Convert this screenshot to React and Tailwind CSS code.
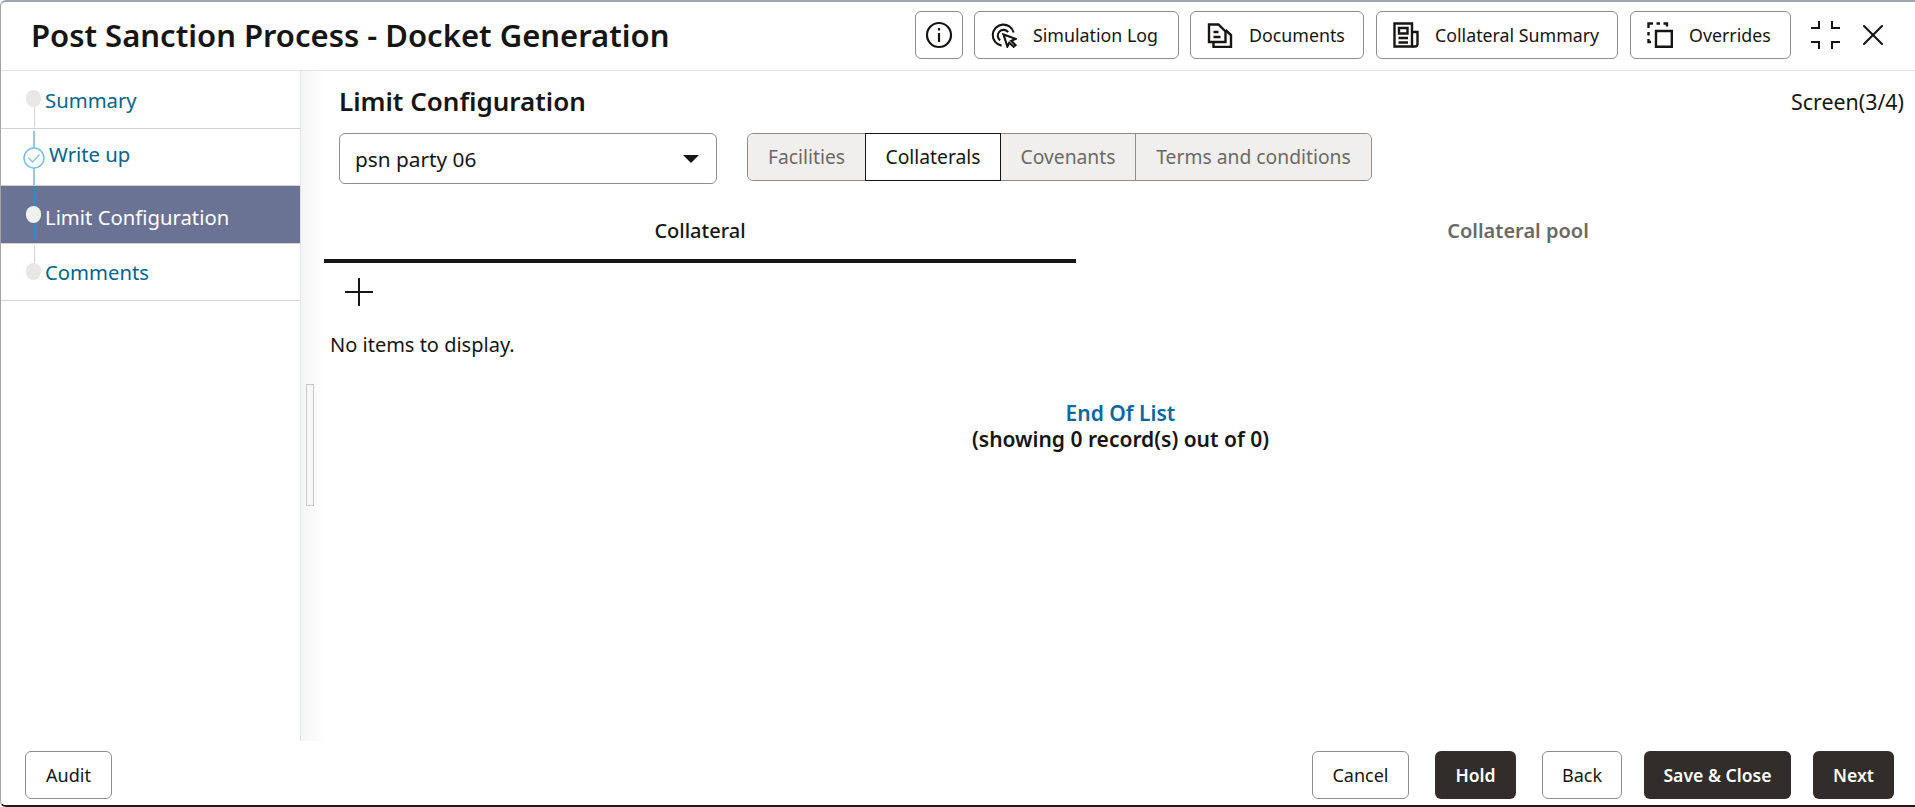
import { X } from "lucide-react";

const font = { fontFamily: '"Noto Sans", sans-serif' };

function SimulationIcon() {
  return (
    <svg width="26" height="25" viewBox="0 0 27 25" fill="none" stroke="#161513" strokeWidth="2.2">
      <path d="M11 23 A11 11 0 1 1 23.5 9.5" />
      <path d="M9.5 17.5 A6 6 0 1 1 17.8 9" />
      <path d="M13 11.5 L25.5 16 L21 18 L25.5 22.5 L23.5 24.2 L19 20 L17 24 Z" fill="#fff" strokeLinejoin="miter" />
    </svg>
  );
}

function DocumentsIcon() {
  return (
    <svg width="26" height="25" viewBox="0 0 25 25" fill="none" stroke="#161513" strokeWidth="2.4">
      <path d="M1.5 1.5 H11 L18 8.5 V19 H1.5 Z" />
      <path d="M18 7 L23.5 12 V24 H6 V19" />
      <path d="M6 9 H11 M6 14 H13" />
    </svg>
  );
}

function SummaryIcon() {
  return (
    <svg width="26" height="26" viewBox="0 0 26 26" fill="none" stroke="#161513" strokeWidth="2.4">
      <path d="M1.5 1.5 H19 V24.5 H1.5 Z" />
      <path d="M6 6 H14.5 V11.5 H6 Z" />
      <path d="M5.5 16 H15 M5.5 20.5 H15" />
      <path d="M19 10 H24.5 V22 Q24.5 24.5 22 24.5 H19" />
    </svg>
  );
}

function OverridesIcon() {
  return (
    <svg width="26" height="26" viewBox="0 0 26 26" fill="none" stroke="#161513" strokeWidth="2.4">
      <path d="M1.5 6 V1.5 H6 M9.5 1.5 H13 M16.5 1.5 H20 V4.5" />
      <path d="M1.5 10 V13.5 M1.5 17 V20 H4" />
      <path d="M9 9 H24.8 V24.8 H9 Z" />
    </svg>
  );
}

function ShrinkIcon() {
  return (
    <svg width="30" height="28" viewBox="0 0 30 28" fill="none" stroke="#161513" strokeWidth="2">
      <path d="M8 0 V7 H0 M21 0 V7 H29 M0 21 H8 V28 M29 21 H21 V28" />
    </svg>
  );
}

function HeaderButton({ icon, label, className }) {
  return (
    <button className={`flex h-12 items-center rounded-md border border-[#8f8d8a] pl-4 text-[17.8px] text-[#161513] ${className}`}>
      {icon}
      <span className="ml-4">{label}</span>
    </button>
  );
}

function Step({ label, color, lineClass, dotClass, labelClass, done }) {
  return (
    <div className={`relative flex h-[57.5px] items-center border-b border-[#d4d2cf] text-[20.3px] ${color}`}>
      {done ? (
        <svg className="absolute left-[22px] top-[1px]" width="22" height="56" viewBox="0 0 22 56" fill="none">
          <path d="M11 1 V18 M11 38 V55" stroke="#2493c9" strokeWidth="1" />
          <circle cx="11" cy="28" r="10" stroke="#7cbbe6" strokeWidth="1.5" />
          <path d="M5.5 28 L9.5 32 L16.5 24.5" stroke="#7cbbe6" strokeWidth="1.2" />
        </svg>
      ) : (
        <>
          <div className={`absolute left-[32.5px] w-px ${lineClass}`} />
          <div className={`absolute left-[25px] h-[17px] w-[15px] rounded-full ${dotClass}`} />
        </>
      )}
      <span className={labelClass}>{label}</span>
    </div>
  );
}

function Tab({ children, className }) {
  return (
    <div className={`flex items-center justify-center text-[19.3px] ${className}`}>
      {children}
    </div>
  );
}

function FooterButton({ children, dark, className }) {
  return (
    <button
      className={`h-12 rounded-md ${dark ? "bg-[#312d2a] text-[17.6px] font-semibold text-white" : "border border-[#8f8d8a] text-lg text-[#161513]"} ${className}`}
    >
      {children}
    </button>
  );
}

export default function App() {
  return (
    <div style={font} className="flex h-[807px] w-[1915px] flex-col overflow-hidden rounded-tl-md rounded-bl-md border-t-2 border-b-2 border-l border-t-[#9da3b0] border-b-[#1f1d1b] border-l-[#a3a3a3] bg-white text-[#161513]">
      <header className="flex h-[69px] shrink-0 items-center border-b border-[#e5e4e3] pb-[2px] pl-[30px]">
        <h1 className="text-[31px] font-semibold">Post Sanction Process - Docket Generation</h1>
        <div className="ml-auto flex items-center">
          <button className="flex h-12 w-12 items-center justify-center rounded-md border border-[#8f8d8a]">
            <svg width="28" height="28" viewBox="0 0 28 28" fill="none" stroke="#161513" strokeWidth="2.2">
              <circle cx="14" cy="14" r="12" />
              <path d="M14 12 V21 M14 7 V9.5" />
            </svg>
          </button>
          <HeaderButton className="ml-[11px] w-[205px]" icon={<SimulationIcon />} label="Simulation Log" />
          <HeaderButton className="ml-[11px] w-[174px]" icon={<DocumentsIcon />} label="Documents" />
          <HeaderButton className="ml-3 w-[242px]" icon={<SummaryIcon />} label="Collateral Summary" />
          <HeaderButton className="ml-3 w-[161px]" icon={<OverridesIcon />} label="Overrides" />
          <div className="ml-5">
            <ShrinkIcon />
          </div>
          <X className="ml-[14px] mr-6" size={36} strokeWidth={1.4} color="#161513" />
        </div>
      </header>

      <div className="flex min-h-0 flex-1">
        <aside className="w-[300px] shrink-0 border-r border-[#dfe5ea]">
          <Step
            label="Summary"
            color="text-[#03648a]"
            lineClass="top-[30px] h-[26px] bg-[#d4d2cf]"
            dotClass="top-[19px] bg-[#e8e7e6]"
            labelClass="ml-[44px] mt-[2px]"
          />
          <Step label="Write up" done color="text-[#03648a]" labelClass="ml-[48px] -mt-[6px]" />
          <Step
            label="Limit Configuration"
            color="bg-[#6b7394] text-white"
            lineClass="top-[2px] h-[51px] bg-[#2493c9]"
            dotClass="top-[20px] bg-[#f0f0ef]"
            labelClass="ml-[44px] mt-[6px]"
          />
          <Step
            label="Comments"
            color="text-[#03648a]"
            lineClass="top-[1px] h-[25px] bg-[#d4d2cf]"
            dotClass="top-[19px] bg-[#e8e7e6]"
            labelClass="ml-[44px]"
          />
        </aside>

        <main className="relative min-w-0 flex-1 overflow-hidden">
          <div className="absolute inset-y-0 left-0 w-[24px] bg-gradient-to-r from-[#f5f5f5] to-white" />
          <div className="absolute left-[5px] top-[313px] h-[122px] w-2 border border-[#c8c8c8] bg-[#f7f7f7]" />

          <div className="relative">
            <div className="flex items-center justify-between pl-[38px] pr-[11px] pt-3">
              <h2 className="text-[26px] font-semibold leading-9">Limit Configuration</h2>
              <span className="pt-[3px] text-[21.4px]">Screen(3/4)</span>
            </div>

            <div className="mt-[14px] flex items-start pl-[38px]">
              <div className="flex h-[51px] w-[378px] items-center justify-between rounded-md border border-[#8f8d8a] pl-[15px] pr-[17px] text-[20.8px]">
                <span className="pt-[2px]">psn party 06</span>
                <span className="h-0 w-0 border-x-[8px] border-t-[8px] border-x-transparent border-t-[#161513]" />
              </div>
              <div className="ml-[30px] flex h-12 rounded-md border border-[#8f8d8a]">
                <Tab className="w-[117px] rounded-l-md bg-[#f1efed] text-[#6b6967]">Facilities</Tab>
                <Tab className="-my-px w-[136px] border border-[#161513] bg-white text-[#161513]">Collaterals</Tab>
                <Tab className="w-[135px] border-r border-[#8f8d8a] bg-[#f1efed] text-[#6b6967]">Covenants</Tab>
                <Tab className="w-[235px] rounded-r-md bg-[#f1efed] text-[#6b6967]">Terms and conditions</Tab>
              </div>
            </div>

            <div className="ml-[23px] mt-4 flex">
              <div className="flex h-[63px] w-[752px] shrink-0 items-center justify-center border-b-4 border-[#161513] pt-[3px] text-xl font-medium">
                Collateral
              </div>
              <div className="flex h-[63px] w-[884px] shrink-0 items-center justify-center pb-[1px] text-xl font-semibold text-[#6b6967]">
                Collateral pool
              </div>
            </div>

            <svg className="ml-[44px] mt-[15px]" width="28" height="28" viewBox="0 0 28 28" fill="none" stroke="#161513" strokeWidth="2">
              <path d="M14 0 V28 M0 14 H28" />
            </svg>

            <p className="ml-[29px] mt-[25px] text-xl leading-7">No items to display.</p>

            <div className="ml-[22px] mt-[41px] w-[1595px] text-center text-[21px] font-semibold leading-[26px]">
              <div className="text-[#0a689f]">End Of List</div>
              <div>(showing 0 record(s) out of 0)</div>
            </div>
          </div>
        </main>
      </div>

      <footer className="flex h-16 shrink-0 items-start bg-white pl-6 pt-[10px]">
        <FooterButton className="w-[87px]">Audit</FooterButton>
        <div className="ml-auto flex pr-[21px]">
          <FooterButton className="w-[97px]">Cancel</FooterButton>
          <FooterButton dark className="ml-[26px] w-[81px]">Hold</FooterButton>
          <FooterButton className="ml-[26px] w-[80px]">Back</FooterButton>
          <FooterButton dark className="ml-[22px] w-[147px]">Save &amp; Close</FooterButton>
          <FooterButton dark className="ml-[22px] w-[81px]">Next</FooterButton>
        </div>
      </footer>
    </div>
  );
}
